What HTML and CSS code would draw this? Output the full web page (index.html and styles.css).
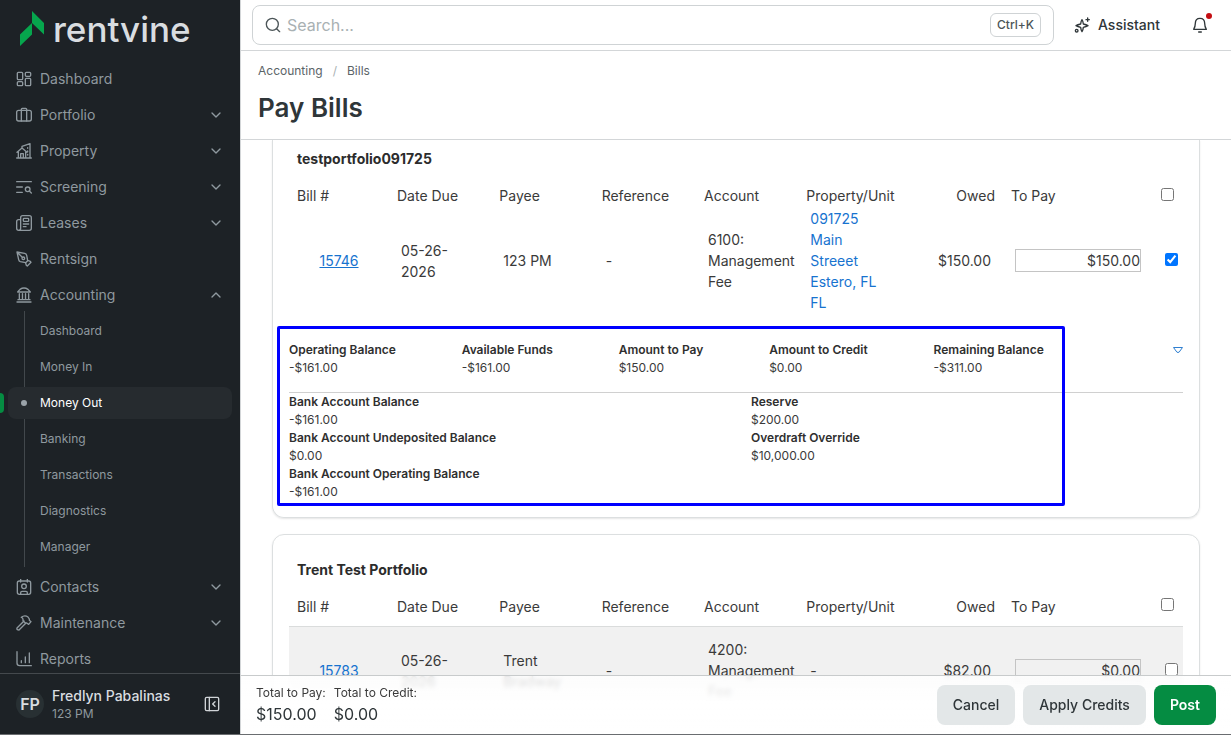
FILE: index.html
```html
<!DOCTYPE html>
<html lang="en">
<head>
<meta charset="utf-8">
<meta name="viewport" content="width=device-width, initial-scale=1">
<title>Pay Bills</title>
<link rel="stylesheet" href="styles.css">
</head>
<body>
<svg class="sprite" aria-hidden="true">
  <symbol id="chevron-down" viewBox="0 0 24 24"><path d="M6 9l6 6 6-6"/></symbol>
  <symbol id="chevron-up" viewBox="0 0 24 24"><path d="M6 15l6-6 6 6"/></symbol>
</svg>
<div class="app">
  <aside class="sidebar">
    <a class="brand" href="#">
      <svg class="brand-mark" viewBox="0 0 24 36" aria-hidden="true"><path d="M12 0l12 12v11.500L12 12zM12 12v11.500L0 35V23.500z"/></svg>
      <span class="brand-name">rentvine</span>
    </a>
    <nav class="nav" aria-label="Main">
      <a class="nav-item" href="#"><svg class="icon" viewBox="0 0 24 24"><rect x="2" y="2" width="8" height="11" rx="1.500"/><rect x="14" y="2" width="8" height="6" rx="1.500"/><rect x="14" y="11" width="8" height="11" rx="1.500"/><rect x="2" y="16" width="8" height="6" rx="1.500"/></svg><span>Dashboard</span></a>
      <a class="nav-item" href="#"><svg class="icon" viewBox="0 0 24 24"><rect x="1" y="5" width="22" height="16" rx="3"/><path d="M8 21V3.500Q8 2 9.500 2h5Q16 2 16 3.500V21"/></svg><span>Portfolio</span><svg class="chevron"><use href="#chevron-down"/></svg></a>
      <a class="nav-item" href="#"><svg class="icon" viewBox="0 0 24 24"><path d="M1 22.500h22M3.500 22V13M1.500 14L9 7.500l7.500 6.500M14.500 13v9M7 22v-6h4v6M9 7V5l12-4v21M17.500 7v1M17.500 12v1M17.500 17v1"/></svg><span>Property</span><svg class="chevron"><use href="#chevron-down"/></svg></a>
      <a class="nav-item" href="#"><svg class="icon" viewBox="0 0 24 24"><path d="M1 4h22M1 12h8.500M1 20h8.500M20 18l3 3"/><circle cx="17.500" cy="15.500" r="3.500"/></svg><span>Screening</span><svg class="chevron"><use href="#chevron-down"/></svg></a>
      <a class="nav-item" href="#"><svg class="icon" viewBox="0 0 24 24"><path d="M6 7H4Q1 7 1 10v10q0 3 3 3t3-3V4q0-3 3-3h10q3 0 3 3v16q0 3-3 3H4M11 17.500h4M11 13.500h8"/><rect x="11" y="5" width="8" height="4.500" rx="1"/></svg><span>Leases</span><svg class="chevron"><use href="#chevron-down"/></svg></a>
      <a class="nav-item" href="#"><svg class="icon" viewBox="0 0 24 24"><path d="M1.500 1.500L4 13q.5 2.500 2.500 3l8 1.500 3-3L16 6.500Q15.500 4 13 3.500zM1.500 1.500L9 9"/><circle cx="11" cy="11" r="2"/><path d="M14.500 18.500l1 3 1.500 1 5.500-5.500-1-1.500-3-1"/></svg><span>Rentsign</span></a>
      <a class="nav-item" href="#" aria-expanded="true"><svg class="icon" viewBox="0 0 24 24"><path d="M1.500 22.500h21M3 19h18M2.500 7.500h19L18 3.500Q12-.5 6 3.500zM5 10v9M9.700 10v9M14.300 10v9M19 10v9"/></svg><span>Accounting</span><svg class="chevron"><use href="#chevron-up"/></svg></a>
      <div class="subnav">
        <a class="subnav-item" href="#">Dashboard</a>
        <a class="subnav-item" href="#">Money In</a>
        <a class="subnav-item is-active" href="#" aria-current="page">Money Out</a>
        <a class="subnav-item" href="#">Banking</a>
        <a class="subnav-item" href="#">Transactions</a>
        <a class="subnav-item" href="#">Diagnostics</a>
        <a class="subnav-item" href="#">Manager</a>
      </div>
      <a class="nav-item" href="#"><svg class="icon" viewBox="0 0 24 24"><rect x="2" y="3" width="20" height="20" rx="3"/><path d="M7 .5v4M17 .5v4M7 22.500v-2q0-2 2-2h6q2 0 2 2v2"/><circle cx="12" cy="11" r="3.500"/></svg><span>Contacts</span><svg class="chevron"><use href="#chevron-down"/></svg></a>
      <a class="nav-item" href="#"><svg class="icon" viewBox="0 0 24 24"><path d="M12 9L1.500 19.500q-.5 2 .5 2.500t2.500.5L15 12M8 3.500Q13-.5 18 3l2 3v2l2.500 2-3.500 4-3-2h-2l-3.500-3.500V6.500Q10.500 4 8 3.500z"/></svg><span>Maintenance</span><svg class="chevron"><use href="#chevron-down"/></svg></a>
      <a class="nav-item" href="#"><svg class="icon" viewBox="0 0 24 24"><path d="M1.500 1v17q0 4 4 4H23M8 17.500v-3M14 17.500V9M20 17.500V3"/></svg><span>Reports</span></a>
    </nav>
    <div class="user">
      <span class="avatar">FP</span>
      <div class="user-text"><span class="user-name">Fredlyn Pabalinas</span><span class="user-sub">123 PM</span></div>
      <button class="icon-button" type="button" aria-label="Collapse sidebar"><svg class="icon" viewBox="0 0 24 24"><rect x="2" y="2" width="20" height="20" rx="2"/><path d="M8 2v20M16.500 8.500L13 12l3.500 3.500"/></svg></button>
    </div>
  </aside>

  <main class="main">
    <header class="topbar">
      <label class="search">
        <svg class="icon" viewBox="0 0 24 24"><circle cx="11" cy="11" r="9"/><path d="M17.500 17.500L22 22"/></svg>
        <input class="search-input" type="search" placeholder="Search..." aria-label="Search">
        <kbd class="shortcut">Ctrl+K</kbd>
      </label>
      <button class="assistant" type="button"><svg class="icon" viewBox="0 0 24 24"><path d="M12 4q1.500 2 2 6.500 4.500 1 7 2.500-2.500 1.500-7 2.500-.5 4.500-2 6.500-1.500-2-2-6.500-4.500-1-7-2.500 2.500-1.500 7-2.500.5-4.500 2-6.500zM20.500 1.500v5M18 4h5"/><circle cx="4" cy="20.500" r="2"/></svg>Assistant</button>
      <button class="bell" type="button" aria-label="Notifications"><svg class="icon" viewBox="0 0 24 24"><path d="M2.500 18.500Q5 14.500 5 9.500 5 2 12 2t7 7.500q0 5 2.500 9zM10 22.500h4"/></svg><span class="bell-dot"></span></button>
    </header>

    <section class="page-header">
      <nav class="breadcrumb" aria-label="Breadcrumb"><a href="#">Accounting</a><span class="slash">/</span><a href="#">Bills</a></nav>
      <h1 class="page-title">Pay Bills</h1>
    </section>

    <div class="content">
      <section class="card card--continued">
        <h2 class="card-title">testportfolio091725</h2>
        <table class="bills">
          <colgroup><col class="col-bill"><col><col><col><col><col><col><col class="col-pay"><col class="col-check"></colgroup>
          <thead><tr><th>Bill #</th><th>Date Due</th><th>Payee</th><th>Reference</th><th>Account</th><th>Property/Unit</th><th class="num">Owed</th><th>To Pay</th><th><input type="checkbox" aria-label="Select all"></th></tr></thead>
          <tbody><tr>
            <td class="bill"><a class="underlined" href="#">15746</a></td><td>05-26-2026</td><td>123 PM</td><td>-</td><td>6100: Management Fee</td>
            <td><a class="property" href="#"><span>091725 Main Streeet Estero, FL FL</span></a></td>
            <td class="num">$150.00</td><td><input class="pay" type="text" value="$150.00" aria-label="To pay for bill 15746"></td><td><input type="checkbox" checked aria-label="Pay bill 15746"></td>
          </tr></tbody>
        </table>
        <div class="summary">
          <div class="summary-top">
            <dl class="balances">
              <div><dt>Operating Balance</dt><dd>-$161.00</dd></div>
              <div><dt>Available Funds</dt><dd>-$161.00</dd></div>
              <div><dt>Amount to Pay</dt><dd>$150.00</dd></div>
              <div><dt>Amount to Credit</dt><dd>$0.00</dd></div>
              <div><dt>Remaining Balance</dt><dd>-$311.00</dd></div>
            </dl>
            <button class="toggle" type="button" aria-label="Toggle details"><svg viewBox="0 0 10 6"><path d="M.5.500h9L6 5.300H4z"/></svg></button>
          </div>
          <div class="summary-details">
            <dl><dt>Bank Account Balance</dt><dd>-$161.00</dd><dt>Bank Account Undeposited Balance</dt><dd>$0.00</dd><dt>Bank Account Operating Balance</dt><dd>-$161.00</dd></dl>
            <dl><dt>Reserve</dt><dd>$200.00</dd><dt>Overdraft Override</dt><dd>$10,000.00</dd></dl>
          </div>
          <div class="highlight"></div>
        </div>
      </section>

      <section class="card">
        <h2 class="card-title">Trent Test Portfolio</h2>
        <table class="bills bills--striped">
          <colgroup><col class="col-bill"><col><col><col><col><col><col><col class="col-pay"><col class="col-check"></colgroup>
          <thead><tr><th>Bill #</th><th>Date Due</th><th>Payee</th><th>Reference</th><th>Account</th><th>Property/Unit</th><th class="num">Owed</th><th>To Pay</th><th><input type="checkbox" aria-label="Select all"></th></tr></thead>
          <tbody><tr>
            <td class="bill"><a href="#">15783</a></td><td>05-26-2026</td><td>Trent Bradway</td><td>-</td><td>4200: Management Fee</td><td>-</td>
            <td class="num">$82.00</td><td><input class="pay" type="text" value="$0.00" aria-label="To pay for bill 15783"></td><td><input type="checkbox" aria-label="Pay bill 15783"></td>
          </tr></tbody>
        </table>
      </section>
    </div>

    <footer class="actions">
      <div class="total"><span class="total-label">Total to Pay:</span><span class="total-value">$150.00</span></div>
      <div class="total"><span class="total-label">Total to Credit:</span><span class="total-value">$0.00</span></div>
      <div class="buttons">
        <button class="button" type="button">Cancel</button>
        <button class="button" type="button">Apply Credits</button>
        <button class="button button--primary" type="button">Post</button>
      </div>
    </footer>
  </main>
</div>
</body>
</html>
```

FILE: styles.css
```css
* { box-sizing: border-box; }
body {
  margin: 0;
  font-family: Inter, "Liberation Sans", sans-serif;
  font-size: 14px;
  line-height: 21px;
  color: #3a3a3a;
  background: #fff;
}
a { color: #1773cf; text-decoration: none; }
button, input, kbd { font: inherit; color: inherit; }
button { border: 0; padding: 0; background: none; }
h1, h2, dl, dd { margin: 0; }
.sprite { position: absolute; width: 0; height: 0; }
.icon, .chevron {
  width: 16px;
  height: 16px;
  flex: none;
  fill: none;
  stroke: currentColor;
  stroke-width: 2;
  stroke-linecap: round;
  stroke-linejoin: round;
}
.app {
  display: flex;
  height: 100vh;
  overflow: hidden;
  border-bottom: 1px solid #6a6d70;
}

/* Sidebar */
.sidebar {
  width: 240px;
  flex: none;
  display: flex;
  flex-direction: column;
  background: #1d2226;
  color: #8f999f;
}
.brand {
  display: flex;
  gap: 9px;
  height: 63px;
  flex: none;
  padding: 11px 20px 0;
  color: #d9dde0;
}
.brand-mark { width: 24px; height: 36px; fill: #06a64d; }
.brand-name { font-size: 35px; line-height: 36px; font-weight: 500; }
.nav { flex: 1; min-height: 0; overflow: hidden; line-height: 20px; }
.nav-item {
  display: flex;
  align-items: center;
  gap: 8px;
  height: 32px;
  margin-bottom: 4px;
  padding: 0 16px;
  font-size: 14px;
  color: inherit;
}
.nav-item .chevron { margin-left: auto; }
.subnav {
  position: relative;
  margin-top: -4px;
  padding: 4px 0;
}
.subnav::before {
  content: "";
  position: absolute;
  left: 24px;
  top: 0;
  bottom: 4px;
  width: 1px;
  background: #42484c;
}
.subnav-item {
  position: relative;
  display: flex;
  align-items: center;
  height: 32px;
  margin: 0 8px 4px;
  padding: 0 32px;
  border-radius: 8px;
  font-size: 12px;
  color: inherit;
}
.is-active { background: #262b2f; color: #fff; }
.is-active::before {
  content: "";
  position: absolute;
  left: -12px;
  top: 6px;
  width: 8px;
  height: 20px;
  border-radius: 4px;
  background: #058c42;
}
.is-active::after {
  content: "";
  position: absolute;
  left: 13px;
  top: 13px;
  width: 6px;
  height: 6px;
  border-radius: 50%;
  background: #9aa3a9;
}
.user {
  display: flex;
  align-items: center;
  gap: 8px;
  height: 61px;
  flex: none;
  padding: 0 16px;
  border-top: 1px solid #44494d;
}
.avatar {
  width: 28px;
  height: 28px;
  border-radius: 50%;
  background: #283033;
  color: #d9dde0;
  font-size: 16px;
  line-height: 28px;
  font-weight: 600;
  text-align: center;
}
.user-text { display: flex; flex-direction: column; padding-top: 2px; }
.user-name { font-size: 14px; line-height: 18px; font-weight: 500; color: #d9dde0; }
.user-sub { font-size: 12px; line-height: 18px; }
.icon-button { display: flex; margin-left: auto; margin-right: 4px; color: #d0d4d7; }

/* Header */
.main {
  position: relative;
  flex: 1;
  min-width: 0;
  display: flex;
  flex-direction: column;
  border-left: 1px solid #d3d6d8;
}
.topbar {
  display: flex;
  align-items: center;
  height: 51px;
  flex: none;
  padding: 0 23px 0 11px;
  border-bottom: 1px solid #d3d6d8;
  line-height: 20px;
  color: #2f3639;
}
.search {
  flex: 1;
  display: flex;
  align-items: center;
  gap: 6px;
  height: 40px;
  padding: 0 12px;
  border: 1px solid #cfd3d5;
  border-radius: 8px;
  color: #4c5558;
}
.search-input { flex: 1; min-width: 0; border: 0; padding: 0; outline: 0; font-size: 16px; background: none; }
.search-input::placeholder { color: #a9b1b3; }
.shortcut {
  height: 24px;
  padding: 0 6px;
  border: 1px solid #cfd3d5;
  border-radius: 6px;
  font-size: 12px;
  line-height: 22px;
  font-weight: 500;
}
.assistant {
  display: flex;
  align-items: center;
  gap: 8px;
  margin: 0 32px 0 20px;
  font-weight: 500;
}
.bell { position: relative; display: flex; }
.bell-dot {
  position: absolute;
  left: 14px;
  top: -4px;
  width: 6px;
  height: 6px;
  border-radius: 50%;
  background: #c40d12;
}
.page-header {
  height: 89px;
  flex: none;
  padding: 11px 17px 0;
  border-bottom: 1px solid #d3d6d8;
}
.breadcrumb { display: flex; gap: 10px; font-size: 12px; line-height: 18px; }
.breadcrumb a { color: #5b6467; }
.slash { color: #a9b1b3; }
.page-title {
  margin-top: 10px;
  font-size: 26px;
  line-height: 36px;
  font-weight: 600;
  color: #2f3639;
}

/* Bills */
.content { flex: 1; min-height: 0; overflow: hidden; padding: 0 31px; }
.card {
  margin-bottom: 16px;
  padding: 24px 16px 16px;
  border: 1px solid #dcdfe0;
  border-radius: 12px;
  box-shadow: 0 1px 2px #0000001a;
}
.card--continued {
  padding-top: 8px;
  border-top: 0;
  border-radius: 0 0 12px 12px;
}
.card-title { padding: 0 8px; font-size: 14px; line-height: 22px; font-weight: 700; color: #2c2c2c; }
.bills { width: 100%; table-layout: fixed; border-collapse: collapse; }
.col-bill { width: 100px; }
.col-pay { width: 150px; }
.col-check { width: 30px; }
.bills th { height: 45px; padding: 6px 8px 0; font-weight: 400; text-align: left; }
.bills td { height: 91px; padding: 0 12px; }
.bills .num { text-align: right; }
.bills .bill { text-align: center; }
.bills input { display: block; margin: 0; }
.bills input[type="checkbox"] { width: 13px; height: 13px; margin-bottom: 3px; }
.bills .pay { width: 100%; height: 23px; padding: 0; border: 1px solid #c4c4c4; border-radius: 0; text-align: right; background: none; }
.underlined { text-decoration: underline; }
.property { display: flex; align-items: center; height: 63px; }
.bills--striped tbody { background: #f1f1f1; border-top: 1px solid #dadcdc; }
.bills--striped td { height: 89px; }

/* Balance summary */
.summary { position: relative; padding-top: 35px; font-size: 12px; line-height: 18px; }
.summary dt { font-weight: 600; color: #2f2f2f; }
.summary-top {
  display: flex;
  justify-content: space-between;
  align-items: flex-start;
  padding-bottom: 15px;
  border-bottom: 1px solid #d0d0d0;
}
.balances { width: 86%; display: flex; justify-content: space-between; padding-right: 14px; }
.toggle { display: flex; height: 18px; align-items: center; }
.toggle svg { width: 10px; height: 6px; fill: none; stroke: #2f7fd0; }
.summary-details { display: grid; grid-template-columns: 462px 1fr; }
.highlight {
  position: absolute;
  left: -12px;
  right: 118px;
  top: 20px;
  bottom: -5px;
  border: 3px solid #00f;
  border-radius: 2px;
  pointer-events: none;
}

/* Footer bar, overlays the scrolling bills */
.actions {
  position: absolute;
  left: 0;
  right: 0;
  bottom: 0;
  display: flex;
  align-items: center;
  gap: 8px;
  height: 59px;
  padding: 0 15px;
  border-top: 1px solid #c8cbcc;
  line-height: 20px;
  background: linear-gradient(#ffffffcc, #fffffff5 50%, #fffffffa);
  backdrop-filter: blur(2px);
}
.total { display: flex; flex-direction: column; padding-bottom: 2px; }
.total-label { font-size: 12px; line-height: 20px; }
.total-value { font-size: 16px; line-height: 22px; color: #2f3639; }
.buttons { display: flex; gap: 8px; margin-left: auto; }
.button {
  height: 40px;
  padding: 0 16px;
  border-radius: 8px;
  background: #e3e7e8;
  color: #2f3639;
  font-weight: 500;
}
.button--primary { background: #058c42; color: #fff; font-weight: 600; }
```
